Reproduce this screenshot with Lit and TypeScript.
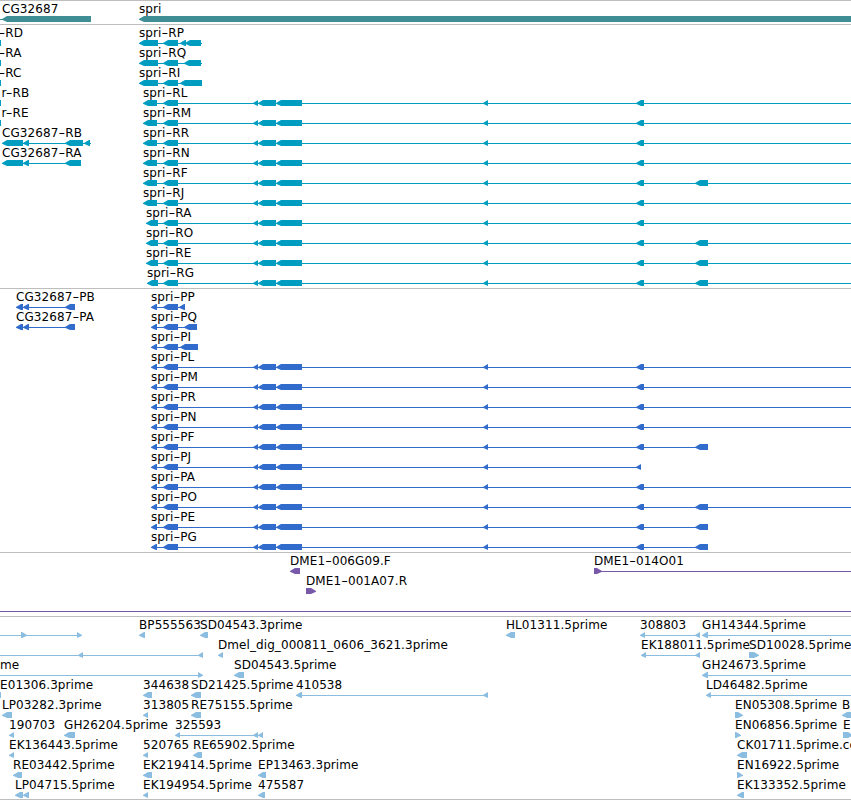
import { LitElement, html, svg, css } from "lit";
import { customElement, property } from "lit/decorators.js";

type Span = [number, number];
interface Glyph {
  name?: string;
  x?: number;
  line?: Span;
  left?: Span[];
  right?: Span[];
}
type Row = Glyph[];

const WIDTH = 851;
const ROW = 20;

const shared: Span[] = [[163, 178], [253, 258], [258, 276], [276, 302], [483, 488]];
const CLIPPED: Glyph = { left: [[-8, 1]] };

const gene = (name: string, start: number, first: Span, last: Span[], end: number): Glyph => ({
  name,
  x: start,
  line: [start + 1, end],
  left: [first, ...shared, ...last],
});
const exon = (name: string, start: number, end: number, line?: Span): Glyph => ({
  name, x: start, left: [[start, end]], line,
});
const forward = (name: string, start: number, end: number, line?: Span): Glyph => ({
  name, x: start, right: [[start, end]], line,
});

const MID: Span = [636, 644];
const FAR: Span = [695, 708];

const geneRows: Row[] = [[
  exon("CG32687", 2, 91, [0, 3]),
  exon("spri", 139, 860),
]];

const transcriptRows: Row[] = [
  [CLIPPED, { name: "-RD", x: -1.5 }, { name: "spri-RP", x: 139, line: [140, 202], left: [[139, 158], [163, 178], [180, 186], [185, 201]] }],
  [CLIPPED, { name: "-RA", x: -1.5 }, { name: "spri-RQ", x: 139, line: [140, 202], left: [[139, 158], [163, 178], [184, 201]] }],
  [CLIPPED, { name: "-RC", x: -1.5 }, { name: "spri-RI", x: 139, line: [140, 202], left: [[139, 158], [163, 178], [180, 202]] }],
  [CLIPPED, { name: "r-RB", x: 1.5 }, gene("spri-RL", 143, [143, 157], [MID], WIDTH)],
  [CLIPPED, { name: "r-RE", x: 1.5 }, gene("spri-RM", 143, [143, 157], [MID], WIDTH)],
  [{ name: "CG32687-RB", x: 2, line: [3, 91], left: [[2, 23], [23, 29], [65, 83], [84, 90]] }, gene("spri-RR", 143, [143, 157], [MID], WIDTH)],
  [{ name: "CG32687-RA", x: 2, line: [3, 81], left: [[2, 23], [23, 29], [65, 81]] }, gene("spri-RN", 143, [143, 157], [MID], WIDTH)],
  [gene("spri-RF", 143, [143, 157], [MID, FAR], WIDTH)],
  [gene("spri-RJ", 143, [143, 157], [MID], WIDTH)],
  [gene("spri-RA", 146, [146, 158], [MID], WIDTH)],
  [gene("spri-RO", 146, [146, 158], [MID, FAR], WIDTH)],
  [gene("spri-RE", 146, [146, 158], [MID, FAR], WIDTH)],
  [gene("spri-RG", 147, [147, 158], [MID, FAR], WIDTH)],
];

const P: Span = [151, 157];
const proteinRows: Row[] = [
  [{ name: "CG32687-PB", x: 16, line: [17, 75], left: [[16, 23], [23, 29], [65, 75]] }, { name: "spri-PP", x: 151, line: [152, 185], left: [P, [163, 178], [179, 185]] }],
  [{ name: "CG32687-PA", x: 16, line: [17, 75], left: [[16, 23], [23, 29], [65, 75]] }, { name: "spri-PQ", x: 151, line: [152, 197], left: [P, [163, 178], [184, 197]] }],
  [{ name: "spri-PI", x: 151, line: [152, 198], left: [P, [163, 178], [180, 198]] }],
  [gene("spri-PL", 151, P, [MID], WIDTH)],
  [gene("spri-PM", 151, P, [MID], WIDTH)],
  [gene("spri-PR", 151, P, [MID], WIDTH)],
  [gene("spri-PN", 151, P, [MID], WIDTH)],
  [gene("spri-PF", 151, P, [MID, FAR], 708)],
  [gene("spri-PJ", 151, P, [[636, 641]], 641)],
  [gene("spri-PA", 151, P, [MID], WIDTH)],
  [gene("spri-PO", 151, P, [MID, FAR], WIDTH)],
  [gene("spri-PE", 151, P, [MID, FAR], 708)],
  [gene("spri-PG", 151, P, [MID, FAR], 708)],
];

const cloneRows: Row[] = [
  [exon("DME1-006G09.F", 290, 300), forward("DME1-014O01", 594, 602, [595, WIDTH])],
  [forward("DME1-001A07.R", 306, 316)],
  [{ line: [0, WIDTH] }],
];

const estRows: Row[] = [
  [
    { line: [0, 80], right: [[21, 27], [77, 82]] },
    exon("BP555563", 139, 145), exon("SD04543.3prime", 200, 208), exon("HL01311.5prime", 506, 515),
    { name: "308803", x: 640, line: [641, 700], left: [[640, 645], [695, 700]] },
    exon("GH14344.5prime", 702, 708, [703, WIDTH]),
  ],
  [
    { line: [0, 203], left: [[78, 83], [198, 203]] },
    exon("Dmel_dig_000811_0606_3621.3prime", 218, 223),
    { name: "EK188011.5prime", x: 641, line: [642, 700], left: [[641, 646], [695, 700]] },
    forward("SD10028.5prime", 749, 759),
  ],
  [
    { name: "me", x: 0, line: [0, 203], right: [[198, 203]] },
    exon("SD04543.5prime", 234, 244), exon("GH24673.5prime", 702, 708, [703, WIDTH]),
  ],
  [
    CLIPPED, { name: "E01306.3prime", x: 0 },
    exon("344638", 143, 152), exon("SD21425.5prime", 191, 201),
    { name: "410538", x: 296, line: [297, 488], left: [[296, 302], [483, 488]] },
    exon("LD46482.5prime", 706, 711, [707, WIDTH]),
  ],
  [
    exon("LP03282.3prime", 2, 12), exon("313805", 143, 148), exon("RE75155.5prime", 191, 201),
    forward("EN05308.5prime", 735, 743), exon("BP", 842, 854),
  ],
  [
    exon("190703", 9, 14), exon("GH26204.5prime", 64, 75),
    { name: "325593", x: 175, line: [176, 263], left: [[175, 180], [253, 258], [258, 263]] },
    forward("EN06856.5prime", 735, 741), forward("E", 843, 853),
  ],
  [
    exon("EK136443.5prime", 9, 14), exon("520765", 143, 148), exon("RE65902.5prime", 193, 202),
    exon("CK01711.5prime.contig", 737, 747),
  ],
  [
    exon("RE03442.5prime", 13, 22), exon("EK219414.5prime", 143, 152), exon("EP13463.3prime", 258, 266),
    forward("EN16922.5prime", 737, 743),
  ],
  [
    { name: "LP04715.5prime", x: 15, left: [[15, 23], [23, 29]] },
    exon("EK194954.5prime", 143, 148), exon("475587", 258, 265), exon("EK133352.5prime", 737, 744),
  ],
];

@customElement("genome-track")
export class GenomeTrack extends LitElement {
  @property({ attribute: false }) rows: Row[] = [];
  @property({ type: Number }) height = 0;
  @property() color = "#000";

  static styles = css`
    :host { display: block; border-top: 1px solid #bebebe; }
    svg { display: block; overflow: hidden; }
    text { font: 12px "DejaVu Sans", "Liberation Sans", sans-serif; letter-spacing: 0.08px; fill: #000; white-space: pre; }
  `;

  private leftArrow([a, b]: Span) {
    const h = Math.min(a + 5, b);
    return svg`<path d="M${a} 18L${h} 15H${b}V21H${h}L${a} 18.7Z"/>`;
  }

  private rightArrow([a, b]: Span) {
    const h = Math.max(b - 5, a);
    return svg`<path d="M${b} 18L${h} 15H${a}V21H${h}L${b} 18.7Z"/>`;
  }

  // The hyphen is stretched to the width of a narrow dash.
  private label(name: string) {
    const [head, tail] = name.split("-");
    if (tail === undefined) return name;
    return svg`${head}<tspan textLength="6.8" lengthAdjust="spacingAndGlyphs">-</tspan>${tail}`;
  }

  private glyph(g: Glyph) {
    return svg`
      ${g.line ? svg`<rect x=${g.line[0]} y="18" width=${g.line[1] - g.line[0]} height="1"/>` : null}
      ${(g.left ?? []).map((s) => this.leftArrow(s))}
      ${(g.right ?? []).map((s) => this.rightArrow(s))}
      ${g.name ? svg`<text x=${g.x ?? 0} y="12">${this.label(g.name)}</text>` : null}
    `;
  }

  render() {
    return html`<svg width=${WIDTH} height=${this.height} fill=${this.color}>
      ${this.rows.map((row, i) => svg`<g transform="translate(0 ${i * ROW})">${row.map((g) => this.glyph(g))}</g>`)}
    </svg>`;
  }
}

@customElement("app-root")
export class AppRoot extends LitElement {
  static styles = css`
    :host {
      display: flex; flex-direction: column; box-sizing: border-box;
      width: 851px; height: 800px; overflow: hidden;
      background: #fff; border-bottom: 1px solid #bebebe;
    }
    genome-track { flex: none; }
  `;

  render() {
    return html`
      <genome-track .rows=${geneRows} .height=${23} .color=${"#3f8e96"}></genome-track>
      <genome-track .rows=${transcriptRows} .height=${263} .color=${"#009dc0"}></genome-track>
      <genome-track .rows=${proteinRows} .height=${263} .color=${"#316ccc"}></genome-track>
      <genome-track .rows=${cloneRows} .height=${63} .color=${"#7858a8"}></genome-track>
      <genome-track .rows=${estRows} .height=${182} .color=${"#8abddf"}></genome-track>
    `;
  }
}
